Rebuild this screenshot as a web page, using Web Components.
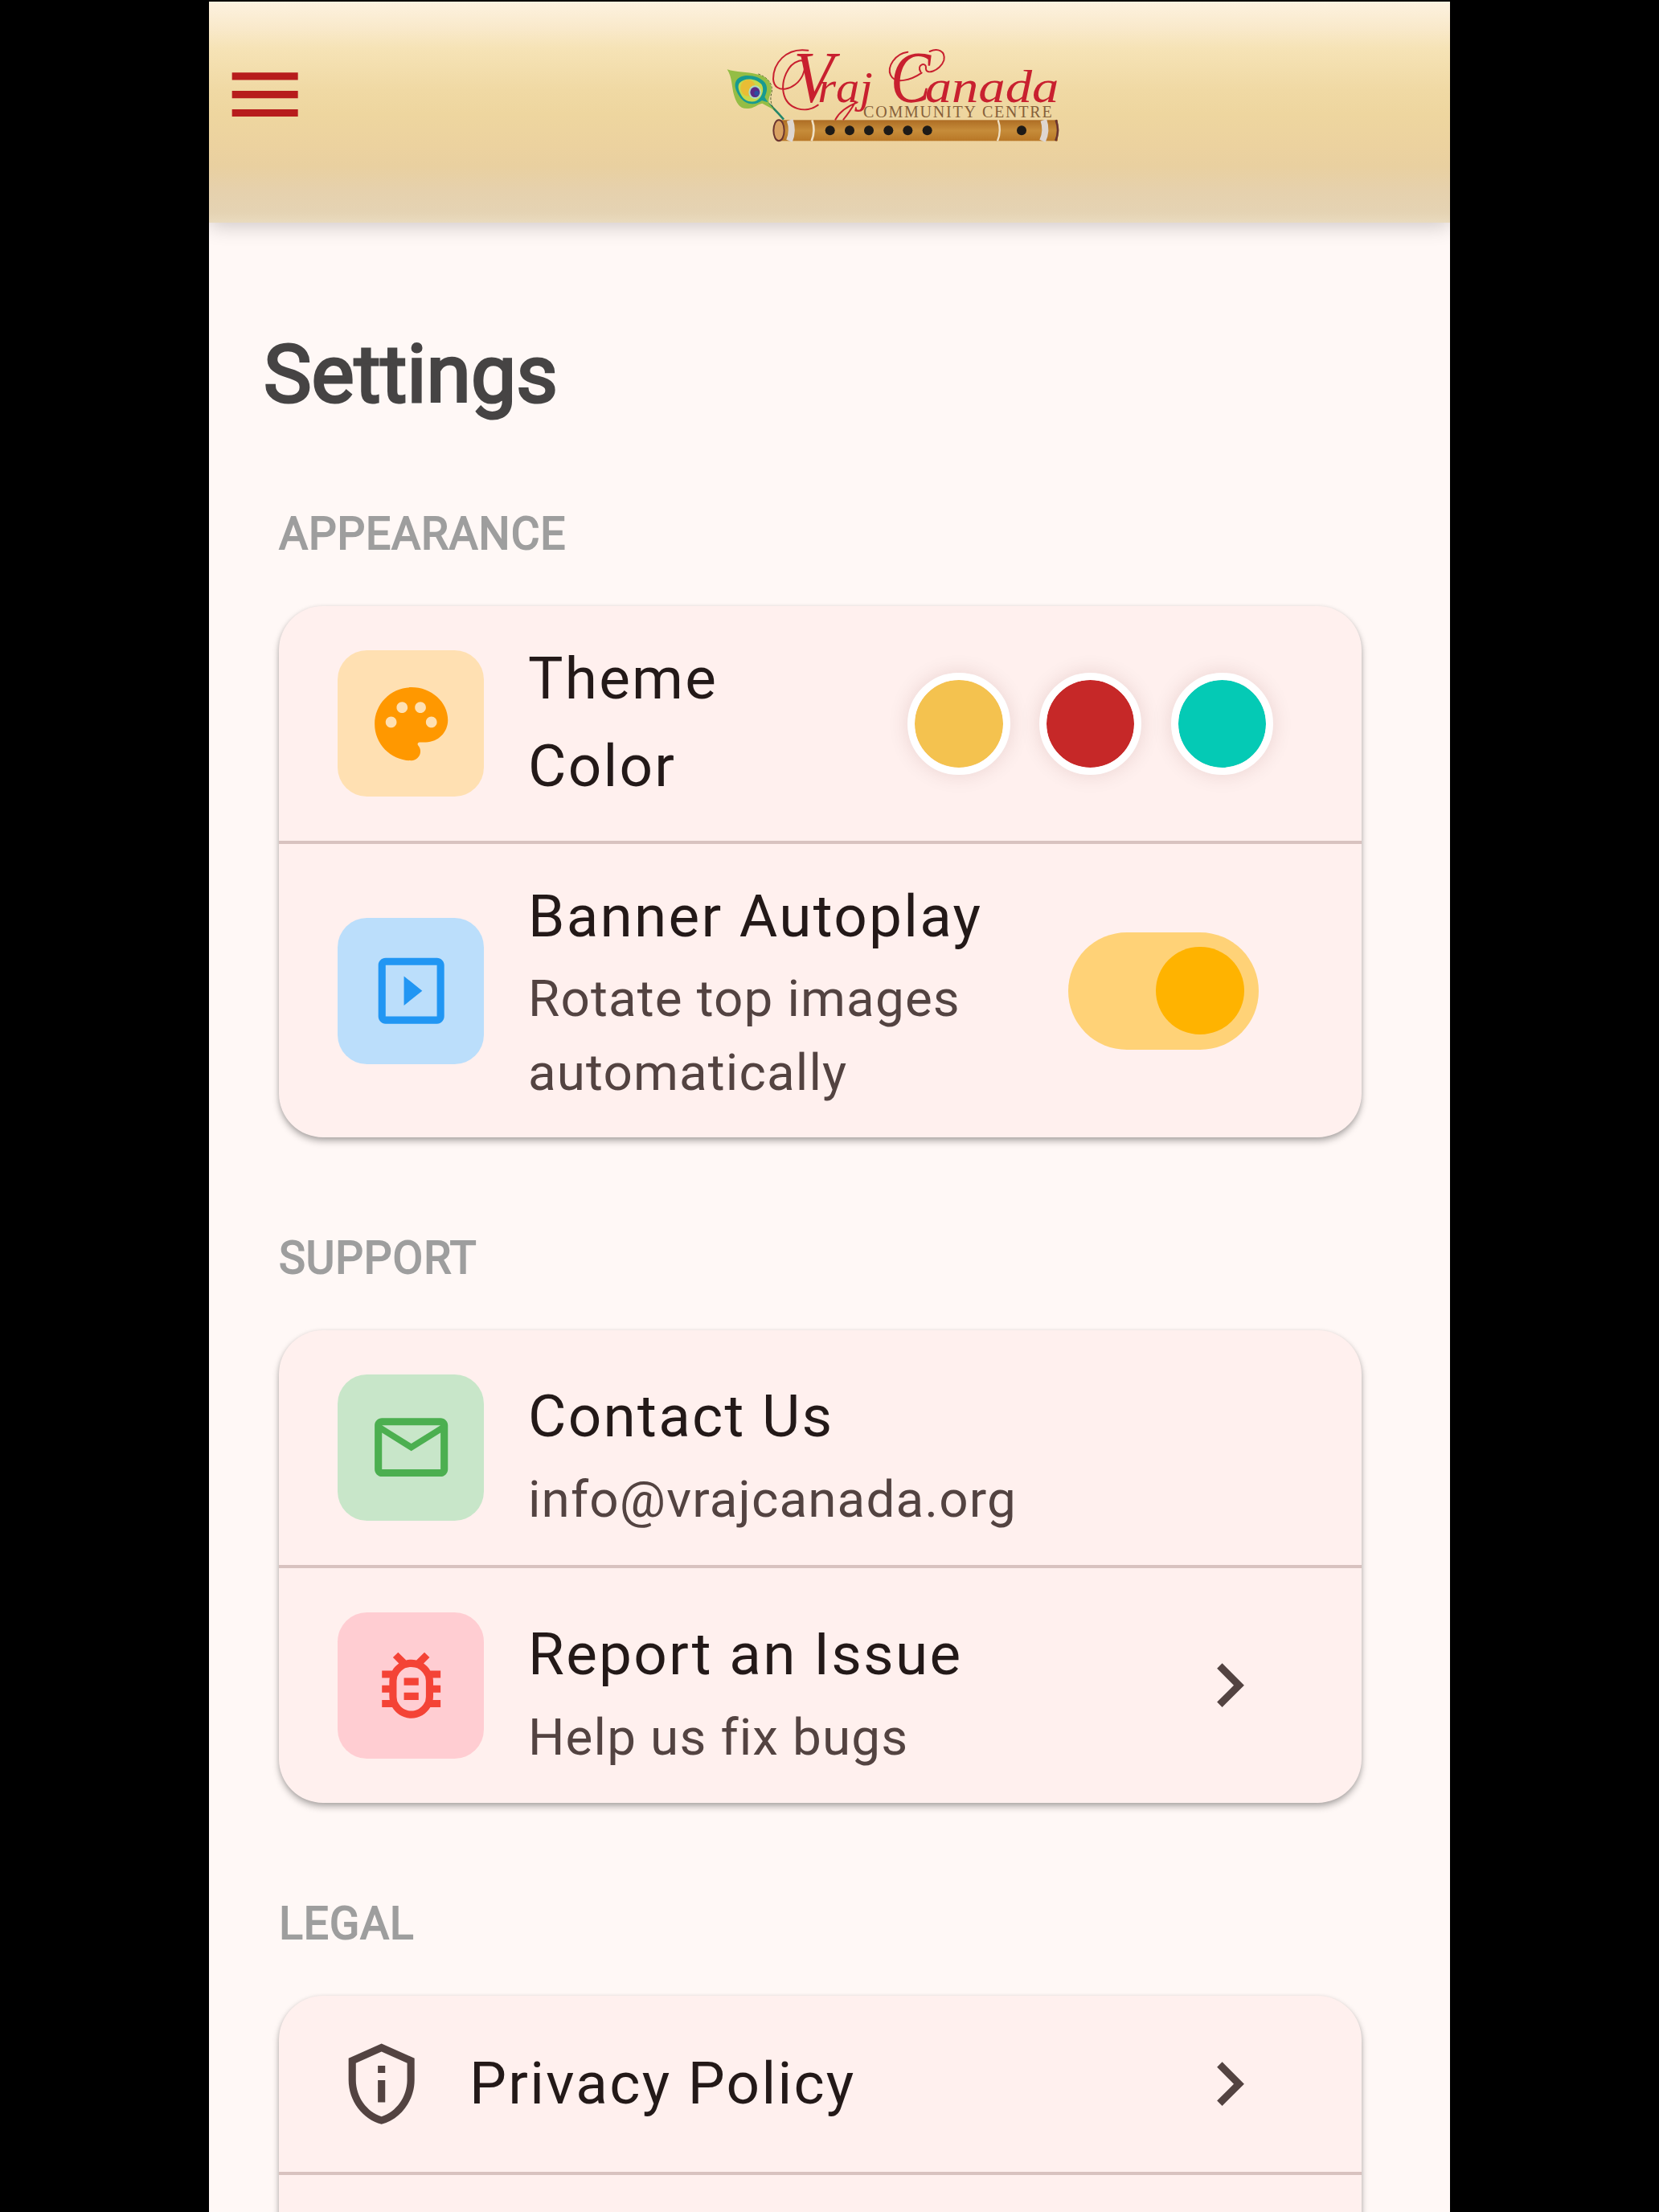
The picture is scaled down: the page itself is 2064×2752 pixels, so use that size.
<!DOCTYPE html>
<html lang="en">
<head>
<meta charset="utf-8">
<title>Settings</title>
<style>
  :root {
    --dp: 4.556px;
  }

  body {
    margin: 0;
    height: 2752px;
    overflow: hidden;
    background: #000;
    font-family: Roboto, "Liberation Sans", sans-serif;
  }
</style>
</head>
<body>
<settings-page></settings-page>

<script>
  const ICONS = {
    menu: "M3 18h18v-2H3v2zm0-5h18v-2H3v2zm0-7v2h18V6H3z",
    palette: "M12 2C6.49 2 2 6.49 2 12s4.49 10 10 10c1.38 0 2.5-1.12 2.5-2.5 0-.61-.23-1.2-.64-1.67-.08-.1-.13-.21-.13-.33 0-.28.22-.5.5-.5H16c3.31 0 6-2.69 6-6 0-4.96-4.49-9-10-9zm5.5 11c-.83 0-1.5-.67-1.5-1.5s.67-1.5 1.5-1.5 1.5.67 1.5 1.5-.67 1.5-1.5 1.5zm-3-4c-.83 0-1.5-.67-1.5-1.5S13.67 6 14.5 6s1.5.67 1.5 1.5S15.33 9 14.5 9zM5 11.5C5 10.67 5.67 10 6.5 10S8 10.67 8 11.5 7.33 13 6.5 13 5 12.33 5 11.5zm6-4C11 8.33 10.33 9 9.5 9S8 8.33 8 7.5 8.67 6 9.5 6s1.5.67 1.5 1.5z",
    slideshow: "M10 8v8l5-4-5-4zm9-5H5c-1.1 0-2 .9-2 2v14c0 1.1.9 2 2 2h14c1.1 0 2-.9 2-2V5c0-1.1-.9-2-2-2zm0 16H5V5h14v14z",
    mail: "M22 6c0-1.1-.9-2-2-2H4c-1.1 0-2 .9-2 2v12c0 1.1.9 2 2 2h16c1.1 0 2-.9 2-2V6zm-2 0l-8 5-8-5h16zm0 12H4V8l8 5 8-5v10z",
    bug: "M20 8h-2.81c-.45-.78-1.07-1.45-1.82-1.96L17 4.41 15.59 3l-2.17 2.17C12.96 5.06 12.49 5 12 5s-.96.06-1.41.17L8.41 3 7 4.41l1.62 1.63C7.88 6.55 7.26 7.22 6.81 8H4v2h2.09c-.05.33-.09.66-.09 1v1H4v2h2v1c0 .34.04.67.09 1H4v2h2.81c1.04 1.79 2.97 3 5.19 3s4.15-1.21 5.19-3H20v-2h-2.09c.05-.33.09-.66.09-1v-1h2v-2h-2v-1c0-.34-.04-.67-.09-1H20V8zm-4 4v3c0 .22-.03.47-.07.7l-.1.65-.37.65c-.72 1.24-2.04 2-3.46 2s-2.74-.77-3.46-2l-.37-.64-.1-.65C8.03 15.48 8 15.23 8 15v-4c0-.23.03-.48.07-.7l.1-.65.37-.65c.3-.52.72-.97 1.21-1.31l.57-.39.74-.18c.31-.08.63-.12.94-.12.32 0 .63.04.95.12l.68.16.61.42c.5.34.91.78 1.21 1.31l.38.65.1.65c.04.22.07.47.07.69v1zm-6 2h4v2h-4zm0-4h4v2h-4z",
    privacy: "M12 1 3 5v6c0 5.55 3.84 10.74 9 12 5.16-1.26 9-6.45 9-12V5l-9-4zm0 2.19 7 3.11V11c0 4.52-2.98 8.69-7 9.93-4.02-1.24-7-5.41-7-9.93V6.3l7-3.11zM11 7h2v2h-2zm0 4h2v6h-2z",
    chevron: "M10 6 8.59 7.41 13.17 12l-4.58 4.59L10 18l6-6z"
  };

  class MdIcon extends HTMLElement {
    constructor() {
      super();
      this.attachShadow({ mode: "open" });
    }

    connectedCallback() {
      this.shadowRoot.innerHTML = `
        <style>
          :host {
            display: block;
            flex: none;
            width: calc(24 * var(--dp));
            height: calc(24 * var(--dp));
          }

          svg {
            display: block;
            width: 100%;
            height: 100%;
            fill: currentColor;
          }
        </style>
        <svg viewBox="0 0 24 24"><path fill-rule="evenodd" d="${ICONS[this.getAttribute("name")]}"/></svg>
      `;
    }
  }

  class IconTile extends HTMLElement {
    constructor() {
      super();
      this.attachShadow({ mode: "open" });
    }

    connectedCallback() {
      this.shadowRoot.innerHTML = `
        <style>
          :host {
            display: block;
            padding: calc(8 * var(--dp));
            border-radius: calc(8 * var(--dp));
            background: ${this.getAttribute("bg")};
            color: ${this.getAttribute("color")};
          }
        </style>
        <md-icon name="${this.getAttribute("icon")}"></md-icon>
      `;
    }
  }

  class BrandLogo extends HTMLElement {
    constructor() {
      super();
      this.attachShadow({ mode: "open" });
    }

    connectedCallback() {
      const holes = [458, 531, 603, 676, 748, 821, 1173]
        .map(x => `<circle cx="${x}" cy="367" r="18"/>`)
        .join("");

      this.shadowRoot.innerHTML = `
        <style>
          :host {
            display: block;
            width: 460px;
            height: 150px;
          }

          svg {
            display: block;
            width: 100%;
            height: 100%;
          }

          .script {
            font-family: "Liberation Serif", serif;
            font-style: italic;
            fill: #c8202f;
          }

          .caps {
            font-family: "Liberation Serif", serif;
            fill: #86603a;
          }
        </style>
        <svg viewBox="0 0 1380 450">
          <defs>
            <linearGradient id="bamboo" x1="0" y1="0" x2="0" y2="1">
              <stop offset="0" stop-color="#ae6d24"/>
              <stop offset=".5" stop-color="#c68c3a"/>
              <stop offset="1" stop-color="#b87726"/>
            </linearGradient>
          </defs>

          <!-- peacock feather -->
          <path d="M222 262Q250 285 285 326" fill="none" stroke="#23866a" stroke-width="8"/>
          <path d="M190 156Q248 178 240 226Q230 258 250 290" fill="none" stroke="#4d5a2c" stroke-width="3" stroke-dasharray="9 5"/>
          <path d="M74 139C105 150 150 148 184 157C224 165 243 190 239 220C235 238 226 246 230 266L250 290L205 266C190 268 180 280 160 284C120 292 108 262 100 236C90 205 94 170 74 139Z" fill="#94bd45"/>
          <path d="M110 178C130 152 190 160 213 186C228 205 222 224 214 242L226 262L204 255C178 275 142 272 120 240C104 216 98 195 110 178Z" fill="#179a91"/>
          <path d="M120 190C138 168 184 172 203 196C214 216 204 244 184 256C160 266 136 254 126 234C116 216 112 202 120 190Z" fill="#c8d84a"/>
          <ellipse cx="152" cy="208" rx="28" ry="31" fill="#e9bd35"/>
          <ellipse cx="178" cy="224" rx="24" ry="25" fill="#aadcc3"/>
          <ellipse cx="178" cy="224" rx="18" ry="19" fill="#5a2a86"/>
          <circle cx="184" cy="228" r="9" fill="#2c4fa0"/>

          <!-- flute -->
          <rect x="266" y="328" width="1042" height="78" fill="url(#bamboo)"/>
          <path d="M308 328Q322 367 306 406" fill="none" stroke="#ded6d0" stroke-width="24"/>
          <path d="M391 328Q405 367 389 406" fill="none" stroke="#efe0c4" stroke-width="8"/>
          <path d="M1085 328Q1099 367 1083 406" fill="none" stroke="#efe0c4" stroke-width="7"/>
          <path d="M1255 328Q1269 367 1251 406" fill="none" stroke="#ded6d0" stroke-width="24"/>
          <path d="M1301 328Q1316 367 1300 406" fill="none" stroke="#6b3530" stroke-width="8"/>
          <ellipse cx="267" cy="367" rx="20" ry="39" fill="#d9a263" stroke="#6b3530" stroke-width="6"/>
          <g fill="#1d1a17">${holes}</g>

          <!-- flourishes around the wordmark -->
          <g fill="none" stroke="#c8202f" stroke-width="6" stroke-linecap="round">
            <path d="M376 68C290 56 246 120 246 175C250 235 330 218 356 160C374 116 360 100 340 108C300 120 276 180 284 225C296 290 370 305 413 272"/>
            <path d="M748 74C700 80 670 130 684 160C700 195 760 180 800 152"/>
            <path d="M796 148C780 120 815 112 816 130C810 165 870 145 883 105C890 70 860 58 830 72"/>
            <path d="M560 262Q500 285 478 326M552 262Q530 300 508 326"/>
          </g>
          <text class="script" y="262"><tspan x="322" font-size="270" textLength="150" lengthAdjust="spacingAndGlyphs">V</tspan><tspan x="412" font-size="166" textLength="205" lengthAdjust="spacingAndGlyphs">raj</tspan> <tspan x="684" font-size="270" textLength="150" lengthAdjust="spacingAndGlyphs">C</tspan><tspan x="812" font-size="172" textLength="500" lengthAdjust="spacingAndGlyphs">anada</tspan></text>
          <text class="caps" x="582" y="317" font-size="60" textLength="704">COMMUNITY CENTRE</text>
        </svg>
      `;
    }
  }

  class AppHeader extends HTMLElement {
    constructor() {
      super();
      this.attachShadow({ mode: "open" });
    }

    connectedCallback() {
      this.shadowRoot.innerHTML = `
        <style>
          :host {
            display: flex;
            align-items: flex-start;
            box-sizing: border-box;
            height: 274.5px;
            padding-left: 14.7px;
            background: linear-gradient(#fdf2e0 0, #f9e9ca 34px, #f6e3b6 58px, #f0d9a4 110px, #eed69f 140px, #ecd29f 180px, #e9d0a0 205px, #e6d1ad 236px, #e5d3b3 262px, #e9dabd 274px);
            box-shadow: 0 4px 24px rgba(0, 0, 0, .2);
            position: relative;
            z-index: 1;
          }

          md-icon {
            margin-top: 61.3px;
            color: #b71c1c;
          }

          brand-logo {
            margin: 38px 0 0 496px;
          }
        </style>
        <md-icon name="menu"></md-icon>
        <brand-logo></brand-logo>
      `;
    }
  }

  class SettingsSection extends HTMLElement {
    constructor() {
      super();
      this.attachShadow({ mode: "open" });
    }

    connectedCallback() {
      this.shadowRoot.innerHTML = `
        <style>
          :host {
            display: block;
          }

          h2 {
            margin: 0;
            height: 240px;
            display: flex;
            align-items: flex-end;
            box-sizing: border-box;
            padding-bottom: 53px;
            font-size: calc(12 * var(--dp));
            line-height: calc(16 * var(--dp));
            font-weight: 400;
            letter-spacing: 1.1px;
            -webkit-text-stroke: 2px #9e9e9e;
            color: #9e9e9e;
          }

          .card {
            border-radius: calc(12 * var(--dp));
            background: #fff0ee;
            box-shadow: 0 5px 9px rgba(0, 0, 0, .28), 0 1px 5px rgba(0, 0, 0, .1);
          }
        </style>
        <h2>${this.getAttribute("label")}</h2>
        <div class="card"><slot></slot></div>
      `;
    }
  }

  class SettingRow extends HTMLElement {
    constructor() {
      super();
      this.attachShadow({ mode: "open" });
    }

    connectedCallback() {
      const label = this.getAttribute("label") || "";
      const sub = this.getAttribute("sub");

      this.shadowRoot.innerHTML = `
        <style>
          :host {
            display: flex;
            align-items: center;
            gap: calc(12 * var(--dp));
            box-sizing: border-box;
            height: calc(var(--row, 64) * var(--dp));
            padding: 0 calc(24 * var(--dp)) 0 calc(16 * var(--dp));
          }

          :host([divided]) {
            height: calc((var(--row, 64) + 1) * var(--dp));
            border-bottom: var(--dp) solid #d8c2bf;
          }

          .text {
            flex: 1;
            min-width: 0;
            padding-top: var(--drop, 0px);
            padding-bottom: var(--lift, 0px);
          }

          .title {
            font-size: calc(16 * var(--dp));
            line-height: calc(24 * var(--dp));
            letter-spacing: calc(.5 * var(--dp));
            color: #231918;
          }

          .sub {
            margin-top: 2.5px;
            font-size: calc(14 * var(--dp));
            line-height: calc(20 * var(--dp));
            letter-spacing: calc(.25 * var(--dp));
            color: #534341;
          }
        </style>
        <slot name="lead"></slot>
        <div class="text">
          <div class="title">${label}</div>
          ${sub ? `<div class="sub">${sub}</div>` : ""}
        </div>
        <slot name="trail"></slot>
      `;
    }
  }

  class ColorSwatches extends HTMLElement {
    constructor() {
      super();
      this.attachShadow({ mode: "open" });
    }

    connectedCallback() {
      const dots = this.getAttribute("colors")
        .split(" ")
        .map(c => `<i style="background:${c}"></i>`)
        .join("");

      this.shadowRoot.innerHTML = `
        <style>
          :host {
            display: flex;
            gap: calc(8 * var(--dp));
            padding-left: calc(4 * var(--dp));
          }

          i {
            width: calc(24 * var(--dp));
            height: calc(24 * var(--dp));
            border: calc(2 * var(--dp)) solid #fff;
            background-clip: padding-box !important;
            border-radius: 50%;
            box-shadow: 0 0 26px rgba(80, 0, 10, .12);
          }
        </style>
        ${dots}
      `;
    }
  }

  class ToggleSwitch extends HTMLElement {
    constructor() {
      super();
      this.attachShadow({ mode: "open" });
    }

    connectedCallback() {
      this.shadowRoot.innerHTML = `
        <style>
          :host {
            display: flex;
            justify-content: flex-end;
            align-items: center;
            box-sizing: border-box;
            width: calc(52 * var(--dp));
            height: calc(32 * var(--dp));
            margin: 0 calc(4 * var(--dp));
            padding: 0 calc(4 * var(--dp));
            border-radius: calc(16 * var(--dp));
            background: #ffd277;
          }

          i {
            width: calc(24 * var(--dp));
            height: calc(24 * var(--dp));
            border-radius: 50%;
            background: #ffb300;
          }
        </style>
        <i></i>
      `;
    }
  }

  class SettingsPage extends HTMLElement {
    constructor() {
      super();
      this.attachShadow({ mode: "open" });
    }

    connectedCallback() {
      this.shadowRoot.innerHTML = `
        <style>
          :host {
            display: block;
            box-sizing: border-box;
            width: 1544px;
            height: 2752px;
            margin: 0 auto;
            border-top: 2.5px solid #000;
            overflow: hidden;
            background: #fff8f6;
          }

          main {
            padding: 124.5px 110.5px 0 87.2px;
          }

          h1 {
            margin: 0 0 0 -19.2px;
            height: 113.3px;
            font-size: calc(22 * var(--dp));
            line-height: 130px;
            font-weight: 400;
            -webkit-text-stroke: 3.2px #464444;
            color: #464444;
          }

          md-icon {
            color: #534341;
          }
        </style>
        <app-header></app-header>
        <main>
          <h1>Settings</h1>
          <settings-section label="APPEARANCE">
            <setting-row divided style="--lift: 3px" label="Theme Color">
              <icon-tile slot="lead" icon="palette" bg="#ffe0b2" color="#ff9800"></icon-tile>
              <color-swatches slot="trail" colors="#f4c24f #c62828 #04cab5"></color-swatches>
            </setting-row>
            <setting-row style="--row: 80" label="Banner Autoplay" sub="Rotate top images automatically">
              <icon-tile slot="lead" icon="slideshow" bg="#bbdefb" color="#2196f3"></icon-tile>
              <toggle-switch slot="trail"></toggle-switch>
            </setting-row>
          </settings-section>
          <settings-section label="SUPPORT">
            <setting-row divided style="--drop: 17px" label="Contact Us" sub="info@vrajcanada.org">
              <icon-tile slot="lead" icon="mail" bg="#c8e6c9" color="#4caf50"></icon-tile>
            </setting-row>
            <setting-row style="--drop: 17px" label="Report an Issue" sub="Help us fix bugs">
              <icon-tile slot="lead" icon="bug" bg="#ffcdd2" color="#f44336"></icon-tile>
              <md-icon slot="trail" name="chevron"></md-icon>
            </setting-row>
          </settings-section>
          <settings-section label="LEGAL">
            <setting-row divided style="--row: 48" label="Privacy Policy">
              <md-icon slot="lead" name="privacy"></md-icon>
              <md-icon slot="trail" name="chevron"></md-icon>
            </setting-row>
            <setting-row style="--row: 48"></setting-row>
          </settings-section>
        </main>
      `;
    }
  }

  customElements.define("md-icon", MdIcon);
  customElements.define("icon-tile", IconTile);
  customElements.define("brand-logo", BrandLogo);
  customElements.define("app-header", AppHeader);
  customElements.define("settings-section", SettingsSection);
  customElements.define("setting-row", SettingRow);
  customElements.define("color-swatches", ColorSwatches);
  customElements.define("toggle-switch", ToggleSwitch);
  customElements.define("settings-page", SettingsPage);
</script>
</body>
</html>
